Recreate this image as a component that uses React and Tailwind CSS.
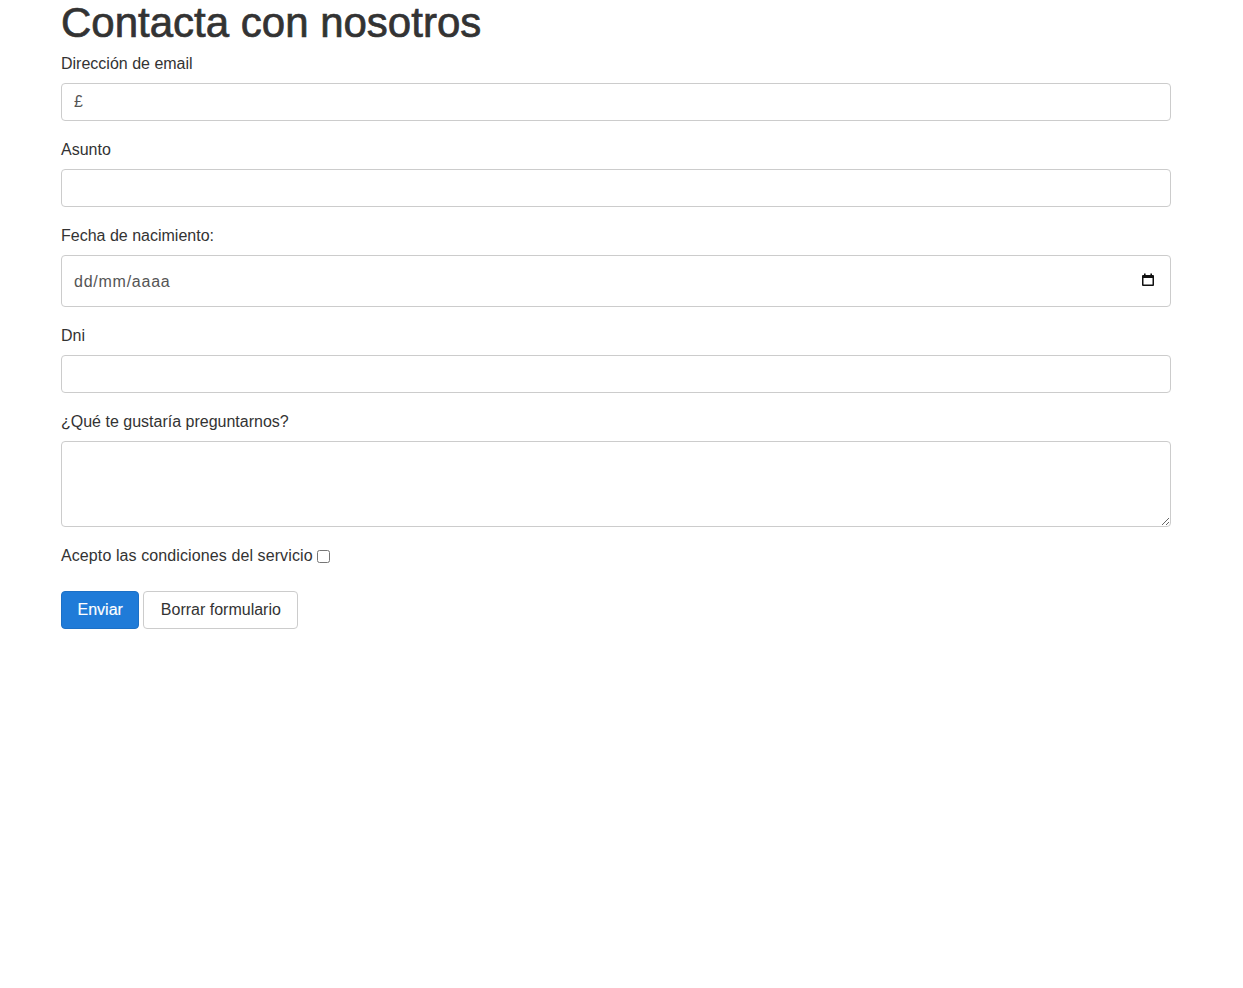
import React from 'react';

const labelCls = 'block h-[20px] leading-[20px] text-[16px] text-[#333]';
const inputCls =
    'block w-full h-[38px] px-3 text-[16px] text-[#555] bg-white border border-[#ccc] rounded-[4px] outline-none placeholder:text-[#555]';

const CalendarIcon = () => (
    <svg width="14" height="14" viewBox="0 0 14 14" className="block">
        <rect x="3" y="0.5" width="1.6" height="2.5" fill="#111" />
        <rect x="9.4" y="0.5" width="1.6" height="2.5" fill="#111" />
        <rect x="1" y="2" width="12" height="11" rx="1" fill="#111" />
        <rect x="2.5" y="5" width="9" height="6.5" fill="#fff" />
    </svg>
);

const App = () => {
    return (
        <div className="min-h-screen bg-white font-['Liberation_Sans',Arial,sans-serif] text-[#333]">
            <div className="w-[1110px] ml-[61px]">
                <h1 className="text-[42px] leading-[46px] font-normal text-[#333] [-webkit-text-stroke:0.7px_#333]">
                    Contacta con nosotros
                </h1>

                <form className="mt-[8px]">
                    <div>
                        <label className={labelCls}>Dirección de email</label>
                        <input type="email" placeholder="£" className={`${inputCls} mt-[9px]`} />
                    </div>

                    <div className="mt-[19px]">
                        <label className={labelCls}>Asunto</label>
                        <input type="text" className={`${inputCls} mt-[9px]`} />
                    </div>

                    <div className="mt-[19px]">
                        <label className={labelCls}>Fecha de nacimiento:</label>
                        <div className="relative mt-[9px]">
                            <input
                                type="text"
                                placeholder="dd/mm/aaaa"
                                className="block w-full h-[52px] px-3 pt-[2px] text-[16px] tracking-[0.75px] text-[#555] bg-white border border-[#ccc] rounded-[4px] outline-none placeholder:text-[#555]"
                            />
                            <span className="absolute right-[16px] top-[18px]">
                                <CalendarIcon />
                            </span>
                        </div>
                    </div>

                    <div className="mt-[19px]">
                        <label className={labelCls}>Dni</label>
                        <input type="text" className={`${inputCls} mt-[9px]`} />
                    </div>

                    <div className="mt-[19px]">
                        <label className={labelCls}>¿Qué te gustaría preguntarnos?</label>
                        <textarea className="block w-full h-[86px] mt-[9px] px-3 py-2 text-[16px] text-[#555] bg-white border border-[#ccc] rounded-[4px] outline-none" />
                    </div>

                    <div className="mt-[19px] flex items-center h-[20px] text-[16px] text-[#333]">
                        <span className="tracking-[0.1px]">Acepto las condiciones del servicio</span>
                        <input type="checkbox" className="ml-[4px] w-[13px] h-[13px]" />
                    </div>

                    <div className="mt-[25px] flex gap-[4px]">
                        <button
                            type="submit"
                            className="h-[38px] px-[15.5px] text-[16px] text-white bg-[#1f7bd8] border border-[#1c70c6] rounded-[4px] [-webkit-text-stroke:0.15px_#fff]"
                        >
                            Enviar
                        </button>
                        <button
                            type="reset"
                            className="h-[38px] px-[16.5px] text-[16px] text-[#333] bg-white border border-[#ccc] rounded-[4px]"
                        >
                            Borrar formulario
                        </button>
                    </div>
                </form>
            </div>
        </div>
    );
};

export default App;
